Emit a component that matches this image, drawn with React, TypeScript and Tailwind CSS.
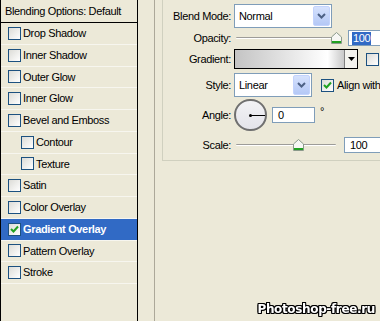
const items = [
  { label: 'Drop Shadow', indent: false },
  { label: 'Inner Shadow', indent: false },
  { label: 'Outer Glow', indent: false },
  { label: 'Inner Glow', indent: false },
  { label: 'Bevel and Emboss', indent: false },
  { label: 'Contour', indent: true },
  { label: 'Texture', indent: true },
  { label: 'Satin', indent: false },
  { label: 'Color Overlay', indent: false },
  { label: 'Gradient Overlay', indent: false, selected: true },
  { label: 'Pattern Overlay', indent: false },
  { label: 'Stroke', indent: false },
];

function Check({ checked = false }: { checked?: boolean }) {
  return (
    <span className="flex h-[13px] w-[13px] shrink-0 items-center justify-center border border-[#1c5180] bg-gradient-to-br from-[#dcdcd7] to-white">
      {checked && (
        <svg width="9" height="9" viewBox="0 0 9 9" aria-hidden="true">
          <path d="M1 4 L3.5 6.5 L8 1.5" fill="none" stroke="#21a121" strokeWidth="2" />
        </svg>
      )}
    </span>
  );
}

function DropButton() {
  return (
    <span className="flex h-full w-[17px] items-center justify-center rounded-[2px] border border-[#c3d3fd] bg-gradient-to-b from-[#d6e2fd] to-[#b4c8f6]">
      <svg width="9" height="6" viewBox="0 0 9 6" aria-hidden="true">
        <path d="M1 1 L4.5 4.5 L8 1" fill="none" stroke="#4d6185" strokeWidth="2" />
      </svg>
    </span>
  );
}

function Slider({ pos }: { pos: number }) {
  return (
    <div className="relative h-[12px] w-[100px]">
      <div className="absolute left-0 right-0 top-[5px] h-[2px] rounded-full border-t border-[#9d9c99] bg-white" />
      <svg
        className="absolute top-0"
        style={{ left: pos - 5 }}
        width="11"
        height="12"
        viewBox="0 0 11 12"
        aria-hidden="true"
      >
        <path d="M0.5 11.5 V5 L5.5 0.5 L10.5 5 V11.5 Z" fill="#f7f7f4" stroke="#8b9a8b" />
        <path d="M1 9 H10 V11 H1 Z" fill="#21a121" />
      </svg>
    </div>
  );
}

export default function App() {
  return (
    <div
      className="flex h-[321px] w-[380px] overflow-hidden bg-[#ece9d8] text-[11px] tracking-[-0.35px] text-black"
      style={{ fontFamily: '"Liberation Sans", Arial, sans-serif' }}
    >
      {/* Styles list */}
      <div className="flex w-[138px] shrink-0 flex-col border-x border-black">
        <div className="flex h-[23px] items-center border-b border-black pl-[4px]">
          Blending Options: Default
        </div>
        {items.map((item) => (
          <div
            key={item.label}
            className={`flex h-[21.75px] items-center gap-[2px] border-b border-[#f7f6ef] ${
              item.indent ? 'pl-[20px]' : 'pl-[7px]'
            } ${item.selected ? 'bg-[#316ac5] font-bold text-white' : ''}`}
          >
            <Check checked={item.selected} />
            <span>{item.label}</span>
          </div>
        ))}
      </div>

      {/* Options */}
      <div className="flex flex-1 pl-[16px]">
        <div className="flex flex-1 border-l border-[#aca899] pl-[7px]">
          <div className="flex h-[161px] flex-1 flex-col border-b border-l border-[#d0d0bf] pt-[4px]">
            <div className="flex h-[24px] items-center">
              <span className="w-[68px] text-right">Blend Mode:</span>
              <div className="ml-[3px] flex h-[24px] w-[98px] items-center justify-between border border-[#7f9db9] bg-white p-[1px] pl-[4px]">
                <span>Normal</span>
                <DropButton />
              </div>
            </div>
            <div className="flex h-[20px] items-center">
              <span className="w-[68px] text-right">Opacity:</span>
              <div className="ml-[5px]">
                <Slider pos={100} />
              </div>
              <div className="ml-[12px] flex h-[16px] flex-1 items-center border border-[#7f9db9] bg-white pl-[3px]">
                <span className="bg-[#316ac5] px-[1px] leading-[13px] text-white">100</span>
              </div>
            </div>
            <div className="flex h-[22px] items-center">
              <span className="w-[68px] text-right">Gradient:</span>
              <div className="ml-[3px] flex h-[20px] items-stretch border border-black">
                <div className="w-[109px] bg-gradient-to-r from-[#c4c4c4] via-[#ffffff] via-85% to-[#c8c8c8]" />
                <div className="flex w-[13px] items-center justify-center border-l border-[#808080] bg-[#f4f3ee]">
                  <svg width="7" height="4" viewBox="0 0 7 4" aria-hidden="true">
                    <path d="M0 0 H7 L3.5 4 Z" fill="#000" />
                  </svg>
                </div>
              </div>
              <span className="ml-[8px]">
                <Check />
              </span>
            </div>
            <div className="mt-[3px] flex h-[24px] items-center">
              <span className="w-[68px] text-right">Style:</span>
              <div className="ml-[3px] flex h-[24px] w-[78px] items-center justify-between border border-[#7f9db9] bg-white p-[1px] pl-[4px]">
                <span>Linear</span>
                <DropButton />
              </div>
              <span className="ml-[9px]">
                <Check checked />
              </span>
              <span className="ml-[3px] whitespace-nowrap">Align with</span>
            </div>
            <div className="mt-[2px] flex h-[32px] items-center">
              <span className="w-[68px] text-right">Angle:</span>
              <div className="relative ml-[3px] h-[32px] w-[33px] rounded-full border-2 border-[#707070] bg-gradient-to-b from-[#f2f2f5] to-[#e4e4ea]">
                <div className="absolute left-[13px] top-[13px] h-[3px] w-[3px] rounded-full bg-black" />
                <div className="absolute left-[14px] right-0 top-[14px] h-[1px] bg-black" />
              </div>
              <div className="ml-[5px] flex h-[16px] w-[43px] items-center border border-[#7f9db9] bg-white pl-[5px]">
                0
              </div>
              <span className="ml-[5px] self-start pt-[4px]">°</span>
            </div>
            <div className="mt-[5px] flex h-[18px] items-center">
              <span className="w-[68px] text-right">Scale:</span>
              <div className="ml-[5px]">
                <Slider pos={62} />
              </div>
              <div className="ml-[8px] flex h-[16px] flex-1 items-center border border-[#7f9db9] bg-white pl-[5px]">
                100
              </div>
            </div>
          </div>
        </div>
      </div>

      <div
        className="pointer-events-none fixed bottom-[3px] right-[5px] text-[12px] font-bold text-white"
        style={{
          fontFamily: '"DejaVu Sans", Verdana, sans-serif',
          textShadow:
            '1px 0 0 #000, -1px 0 0 #000, 0 1px 0 #000, 0 -1px 0 #000, 1px 1px 0 #000, -1px -1px 0 #000, 1px -1px 0 #000, -1px 1px 0 #000',
        }}
      >
        Photoshop-free.ru
      </div>
    </div>
  );
}
